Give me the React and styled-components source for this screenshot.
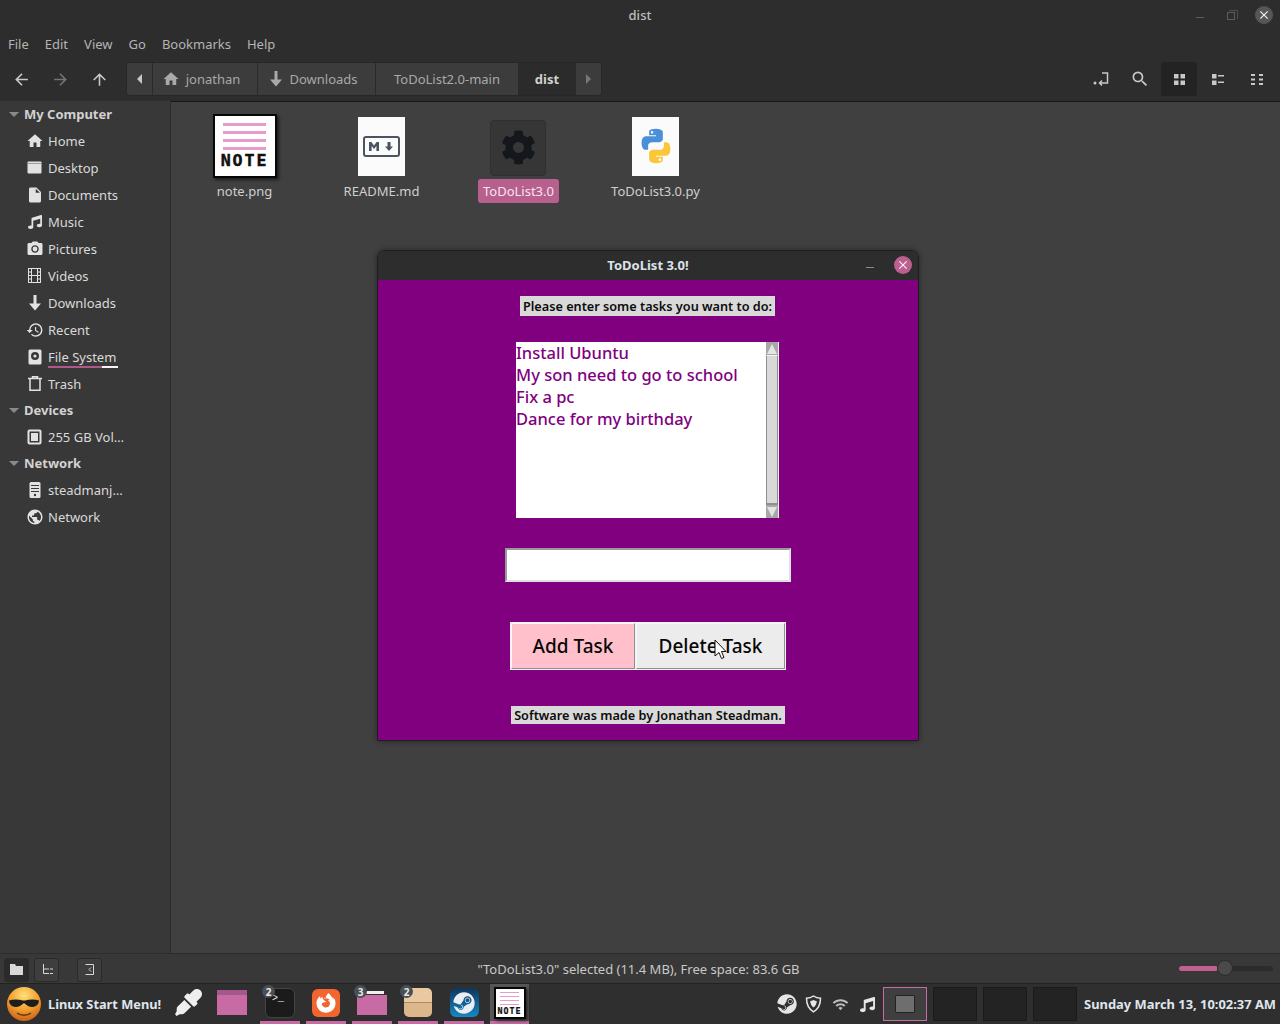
import React from "react";
import styled, { createGlobalStyle } from "styled-components";
import { FaSteam, FaFirefoxBrowser, FaEyeDropper, FaCog, FaMusic } from "react-icons/fa";
import {
  MdHome,
  MdInsertDriveFile,
  MdPhotoCamera,
  MdArrowBack,
  MdArrowForward,
  MdArrowUpward,
  MdHistory,
  MdPublic,
  MdSearch,
  MdWifi,
  MdClose,
} from "react-icons/md";

const UI_FONT = `"Noto Sans", "Open Sans", sans-serif`;

const GlobalStyle = createGlobalStyle`
  html, body {
    margin: 0;
    padding: 0;
    background: #404040;
  }
  * {
    box-sizing: border-box;
  }
`;

const Desktop = styled.div`
  position: relative;
  width: 1280px;
  height: 1024px;
  overflow: hidden;
  display: flex;
  flex-direction: column;
  background: #404040;
  font-family: ${UI_FONT};
  font-size: 13px;
  color: #dadada;
`;

const TitleBar = styled.header`
  height: 30px;
  flex: none;
  display: flex;
  align-items: center;
  justify-content: center;
  position: relative;
  background: #2d2d2d;
  color: #bdbdbd;
  font-weight: 500;
`;

const WindowControls = styled.div`
  position: absolute;
  top: 0;
  right: 7px;
  height: 30px;
  display: flex;
  align-items: center;
  gap: 18px;
`;

const MinimizeMark = styled.span`
  width: 8px;
  height: 1px;
  margin-right: 5px;
  background: ${(p) => p.$color || "#5c5c5c"};
  align-self: center;
  transform: translateY(2px);
`;

const RestoreMark = styled.span`
  width: 8px;
  height: 8px;
  position: relative;
  border: 1px solid #5c5c5c;
  margin-right: 2px;
  transform: translateY(1px);

  &::after {
    content: "";
    position: absolute;
    left: 1px;
    top: -3px;
    width: 8px;
    height: 8px;
    border-top: 1px solid #4c4c4c;
    border-right: 1px solid #4c4c4c;
  }
`;

const CloseButton = styled.span`
  width: 18px;
  height: 18px;
  border-radius: 50%;
  display: flex;
  align-items: center;
  justify-content: center;
  background: ${(p) => p.$color};
  color: #f2f2f2;
  font-size: 14px;
`;

const MenuBar = styled.nav`
  height: 28px;
  flex: none;
  display: flex;
  align-items: center;
  background: #2d2d2d;
  color: #b4b4b4;
`;

const MenuItem = styled.span`
  padding: 0 8px;
`;

const Toolbar = styled.div`
  height: 44px;
  flex: none;
  display: flex;
  align-items: flex-start;
  padding: 4px 5px 0 2px;
  background: #2d2d2d;
  border-bottom: 1px solid #181818;
`;

const ToolButton = styled.span`
  width: 39px;
  height: 34px;
  display: flex;
  align-items: center;
  justify-content: center;
  font-size: 19px;
  color: ${(p) => (p.$dim ? "#747474" : "#c8c8c8")};
`;

const ViewTools = styled.div`
  display: flex;
  gap: 3px;
`;

const ViewButton = styled.span`
  width: 36px;
  height: 34px;
  display: flex;
  align-items: center;
  justify-content: center;
  border-radius: 3px;
  font-size: 20px;
  color: #c8c8c8;
  background: ${(p) => (p.$active ? "#232323" : "transparent")};
`;

const Crumbs = styled.div`
  height: 34px;
  margin-left: 7px;
  display: flex;
  border: 1px solid #272727;
  border-radius: 3px;
  background: #3c3c3c;
  overflow: hidden;
`;

const Crumb = styled.span`
  width: ${(p) => p.$w}px;
  display: flex;
  align-items: center;
  justify-content: center;
  gap: 6px;
  padding-right: ${(p) => p.$pr || 0}px;
  color: ${(p) => (p.$active ? "#d0d0d0" : "#a9a9a9")};
  font-weight: ${(p) => (p.$active ? 700 : 400)};
  background: ${(p) => (p.$active ? "#2b2b2b" : "transparent")};
  border-right: ${(p) => (p.$last ? "none" : "1px solid #2a2a2a")};
  font-size: 18px;

  & > span {
    font-size: 13px;
  }
`;

const Arrow = styled.i`
  width: 0;
  height: 0;
  border-top: 5px solid transparent;
  border-bottom: 5px solid transparent;
  border-${(p) => (p.$left ? "right" : "left")}: 5px solid ${(p) => p.$color || "#c8c8c8"};
`;

const Spacer = styled.div`
  flex: 1;
`;

const Main = styled.main`
  flex: 1;
  display: flex;
  min-height: 0;
  margin-top: -1px;
`;

const Sidebar = styled.aside`
  width: 171px;
  flex: none;
  background: #383838;
  border-right: 1px solid #2c2c2c;
`;

const SideHeading = styled.div`
  height: 26px;
  display: flex;
  align-items: center;
  gap: 5px;
  padding-left: 9px;
  font-weight: 700;
  color: #d2d2d2;
`;

const Caret = styled.i`
  width: 0;
  height: 0;
  border-left: 5px solid transparent;
  border-right: 5px solid transparent;
  border-top: 5px solid #8a8a8a;
`;

const SideRow = styled.div`
  height: 27px;
  display: flex;
  align-items: center;
  gap: 6px;
  padding-left: 27px;
  color: #dadada;
`;

const SideIcon = styled.span`
  width: 15px;
  height: 16px;
  flex: none;
  display: flex;
  align-items: center;
  justify-content: center;
  font-size: 18px;
  color: #e2e2e2;

  & > svg {
    flex: none;
  }
`;

const SideLabel = styled.span`
  position: relative;
`;

const UsageBar = styled.span`
  position: absolute;
  left: 0;
  bottom: -2px;
  width: 70px;
  height: 2px;
  background: linear-gradient(to right, #b0588a 0 54px, #f4f4f4 54px);
`;

const Files = styled.section`
  flex: 1;
  display: flex;
  align-items: flex-start;
  padding: 12px 0 0 5px;
`;

const FileItem = styled.div`
  width: 137px;
  display: flex;
  flex-direction: column;
  align-items: center;
`;

const IconBox = styled.div`
  height: 66px;
  display: flex;
  align-items: center;
  justify-content: center;
`;

const FileName = styled.span`
  padding: 3px ${(p) => (p.$selected ? 5 : 4)}px;
  height: 24px;
  line-height: 18px;
  border-radius: 3px;
  color: ${(p) => (p.$selected ? "#f5e6ee" : "#cfcfcf")};
  background: ${(p) => (p.$selected ? "#b75f8d" : "transparent")};
`;

const NoteThumb = styled.div`
  width: ${(p) => p.$size}px;
  height: ${(p) => p.$size}px;
  display: flex;
  flex-direction: column;
  align-items: center;
  padding: ${(p) => p.$size * 0.11}px ${(p) => p.$size * 0.13}px 0;
  gap: ${(p) => p.$size * 0.085}px;
  background: #ffffff;
  border: ${(p) => Math.max(2, p.$size / 22)}px solid #060606;
  box-shadow: 2px 2px 3px rgba(0, 0, 0, 0.55);
`;

const NoteLine = styled.span`
  width: 100%;
  height: ${(p) => Math.max(1, p.$size / 24)}px;
  flex: none;
  background: #e59ccd;
`;

const NoteWord = styled.span`
  font-family: "DejaVu Sans Mono", "Liberation Mono", monospace;
  font-weight: 700;
  color: #111;
  font-size: ${(p) => p.$size * 0.26}px;
  line-height: ${(p) => p.$size * 0.2}px;
  letter-spacing: ${(p) => p.$size * 0.03}px;
  -webkit-text-stroke: ${(p) => p.$size * 0.007}px #111;
`;

const Page = styled.div`
  width: 47px;
  height: 59px;
  background: #fbfbfb;
  display: flex;
  align-items: center;
  justify-content: center;
`;

const GearTile = styled.div`
  width: 56px;
  height: 56px;
  margin-top: 3px;
  margin-right: 1px;
  border-radius: 4px;
  border: 1px solid #2f2f2f;
  background: #363636;
  display: flex;
  align-items: center;
  justify-content: center;
  font-size: 35px;
  color: #14171b;
`;

const StatusBar = styled.footer`
  height: 31px;
  flex: none;
  display: grid;
  grid-template-columns: 1fr auto 1fr;
  align-items: center;
  background: #383838;
  border-top: 1px solid #2c2c2c;
  border-bottom: 1px solid #222222;
  color: #c8c8c8;
  padding: 0 7px 0 4px;
`;

const StatusTools = styled.div`
  display: flex;
  align-items: center;
  gap: 5px;
  padding-top: 2px;
`;

const StatusButton = styled.span`
  width: 25px;
  height: 24px;
  border-radius: 3px;
  display: flex;
  align-items: center;
  justify-content: center;
  margin-left: ${(p) => p.$gap || 0}px;
  background: ${(p) => (p.$active ? "#2b2b2b" : "#3e3e3e")};
  border: 1px solid #2a2a2a;
`;

const ZoomSlider = styled.div`
  justify-self: end;
  position: relative;
  width: 94px;
  height: 5px;
  border-radius: 3px;
  background: #2b2b2b;
`;

const ZoomFill = styled.span`
  position: absolute;
  left: 0;
  top: 0;
  bottom: 0;
  border-radius: 3px;
  background: #c0608f;
`;

const ZoomKnob = styled.span`
  position: absolute;
  top: -6px;
  width: 16px;
  height: 16px;
  border-radius: 50%;
  background: #4a4a4a;
  border: 1px solid #2a2a2a;
`;

const Taskbar = styled.div`
  height: 40px;
  flex: none;
  display: flex;
  align-items: stretch;
  background: #2f2f2f;
  padding-right: 4px;
`;

const StartButton = styled.div`
  width: 168px;
  display: flex;
  align-items: center;
  gap: 6px;
  padding-left: 6px;
  font-size: 12.8px;
  font-weight: 700;
  color: #dfe6ee;
`;

const Launchers = styled.div`
  display: flex;
  gap: 4px;
`;

const WindowList = styled.div`
  display: flex;
  gap: 6px;
  margin-left: 8px;
`;

const Slot = styled.div`
  position: relative;
  width: ${(p) => p.$w || 40}px;
  display: flex;
  align-items: center;
  justify-content: center;
  background: ${(p) => (p.$active ? "#565656" : "transparent")};
  border-bottom: ${(p) => (p.$open ? "3px solid #c86aa3" : "3px solid transparent")};
`;

const Badge = styled.span`
  position: absolute;
  left: 2px;
  top: 1px;
  width: 13px;
  height: 13px;
  border-radius: 50%;
  display: flex;
  align-items: center;
  justify-content: center;
  font-size: 10px;
  font-weight: 700;
  color: #e8e8e8;
  background: #4a4f55;
  z-index: 1;
`;

const PinkFolder = styled.div`
  width: 30px;
  height: 25px;
  background: #c86aa3;
  border-top: 5px solid #a3588a;
`;

const OpenFolder = styled.div`
  position: relative;
  width: 30px;
  height: 20px;
  margin-top: 5px;
  background: #c86aa3;

  &::before {
    content: "";
    position: absolute;
    left: 8px;
    right: 3px;
    top: -4px;
    height: 3px;
    background: #f0f0f0;
  }
`;

const TerminalTile = styled.div`
  width: 30px;
  height: 30px;
  border-radius: 6px;
  background: #1b1b1b;
  border: 1px solid #444;
  color: #e8e8e8;
  font-family: "Liberation Mono", monospace;
  font-size: 10px;
  line-height: 20px;
  padding-left: 6px;
`;

const FirefoxTile = styled.div`
  width: 28px;
  height: 28px;
  border-radius: 6px;
  background: #f2652f;
  display: flex;
  align-items: center;
  justify-content: center;
  font-size: 20px;
  color: #fff;
`;

const BoxTile = styled.div`
  width: 28px;
  height: 29px;
  border-radius: 5px;
  background: linear-gradient(#eac8a1 0 14px, #a98a67 14px 15px, #dcb78c 15px);
`;

const SteamTile = styled.div`
  width: 29px;
  height: 29px;
  border-radius: 6px;
  background: linear-gradient(#10355a, #1687c6);
  display: flex;
  align-items: center;
  justify-content: center;
  font-size: 22px;
  color: #e8eef2;
`;

const Tray = styled.div`
  margin-left: auto;
  display: flex;
  align-items: center;
`;

const TrayIcon = styled.span`
  width: 27px;
  display: flex;
  align-items: center;
  justify-content: center;
  font-size: ${(p) => p.$size || 17}px;
  color: ${(p) => p.$color || "#e6e6e6"};
`;

const Workspaces = styled.div`
  display: flex;
  gap: 6px;
  margin-left: 2px;
`;

const Workspace = styled.div`
  width: 44px;
  height: 34px;
  display: flex;
  align-items: center;
  justify-content: center;
  background: ${(p) => (p.$active ? "#3f3f3f" : "#232323")};
  border: 1px solid ${(p) => (p.$active ? "#c86aa3" : "#1a1a1a")};
`;

const MiniWindow = styled.span`
  width: 20px;
  height: 18px;
  background: #6e6e6e;
  border: 1px solid #222;
  border-radius: 1px;
`;

const Clock = styled.time`
  margin-left: 7px;
  font-size: 12.9px;
  font-weight: 700;
  color: #dfe6ee;
  white-space: nowrap;
`;

const AppWindow = styled.div`
  position: absolute;
  left: 377px;
  top: 250px;
  width: 542px;
  height: 491px;
  display: flex;
  flex-direction: column;
  border: 1px solid #1e1e1e;
  border-radius: 7px 7px 0 0;
  box-shadow: 0 0 6px rgba(0, 0, 0, 0.4);
  overflow: hidden;
`;

const AppTitle = styled.div`
  height: 29px;
  flex: none;
  padding-bottom: 1px;
  display: flex;
  align-items: center;
  justify-content: center;
  position: relative;
  background: #2d2d2d;
  color: #dde3ea;
  font-weight: 700;
`;

const AppControls = styled.div`
  position: absolute;
  right: 6px;
  top: 5px;
  display: flex;
  align-items: center;
  gap: 15px;
`;

const AppBody = styled.div`
  flex: 1;
  display: flex;
  flex-direction: column;
  align-items: center;
  padding-top: 16px;
  background: #800080;
`;

const TkLabel = styled.div`
  width: ${(p) => p.$w}px;
  height: ${(p) => p.$h}px;
  margin-top: ${(p) => p.$mt || 0}px;
  margin-right: ${(p) => (p.$w % 2 ? 1 : 0)}px;
  display: flex;
  align-items: center;
  justify-content: center;
  white-space: nowrap;
  background: #d9d9d9;
  color: #0c0c0c;
  font-size: 12.7px;
  font-weight: 600;
`;

const ListBox = styled.div`
  width: 263px;
  height: 176px;
  margin: 26px 1px 0 0;
  display: flex;
  background: #fff;
`;

const ListItems = styled.ul`
  flex: 1;
  margin: 0;
  padding: 0;
  list-style: none;
  color: #800080;
  font-size: 16.5px;
  font-weight: 500;
  line-height: 22px;
`;

const ScrollBar = styled.div`
  width: 13px;
  display: flex;
  flex-direction: column;
  border-right: 1px solid #f4f4f4;
`;

const ScrollArrow = styled.span`
  height: 13px;
  flex: none;
  display: flex;
  align-items: center;
  justify-content: center;
  background: #a8a8a8;

  &::after {
    content: "";
    width: 0;
    height: 0;
    border-left: 5px solid transparent;
    border-right: 5px solid transparent;
    border-${(p) => (p.$up ? "bottom" : "top")}: 10px solid #e4e4e4;
  }
`;

const ScrollThumb = styled.span`
  flex: 1;
  background: #d9d9d9;
  border: 1px solid #8e8e8e;
  border-top-color: #f4f4f4;
  border-bottom: 2px solid #8e8e8e;
`;

const Entry = styled.div`
  width: 286px;
  height: 34px;
  margin-top: 30px;
  background: #fff;
  border: 2px solid;
  border-color: #9a9a9a #e0e0e0 #e0e0e0 #9a9a9a;
`;

const ButtonRow = styled.div`
  margin-top: 40px;
  display: flex;
  padding: 1px;
  gap: 1px;
  background: #f4f4f4;
`;

const TkButton = styled.div`
  width: ${(p) => p.$w}px;
  height: 46px;
  display: flex;
  align-items: center;
  justify-content: center;
  background: ${(p) => p.$bg};
  color: #070707;
  font-size: 19px;
  font-weight: 500;
  border: 1px solid;
  border-color: #f6f6f6 #8e8e8e #8e8e8e #f6f6f6;
`;

const Cursor = styled.svg`
  position: absolute;
  left: 336px;
  top: 388px;
`;

function DownArrowGlyph() {
  return (
    <svg width="14" height="16" viewBox="0 0 14 16" fill="currentColor">
      <path d="M5.500 0h3v8.500H13L7 15.500 1 8.500h4.500z" />
    </svg>
  );
}

function DesktopGlyph() {
  return (
    <svg width="15" height="13" viewBox="0 0 15 13">
      <rect x="0.5" y="0.5" width="14" height="12" rx="1" fill="#e2e2e2" />
      <rect x="0.5" y="2" width="14" height="0.8" fill="#8a8a8a" />
    </svg>
  );
}

function FilmGlyph() {
  return (
    <svg width="13" height="15" viewBox="0 0 13 15" fill="none" stroke="#e2e2e2">
      <rect x="0.5" y="0.5" width="12" height="14" />
      <path d="M3.500 0.500v14M9.500 0.500v14M0.500 4h3M0.500 7.500h3M0.500 11h3M9.500 4h3M9.500 7.500h3M9.500 11h3M3.500 7.500h6" />
    </svg>
  );
}

function DiskGlyph() {
  return (
    <svg width="14" height="16" viewBox="0 0 14 16">
      <rect x="0.5" y="0.5" width="13" height="15" rx="1.5" fill="#e2e2e2" />
      <circle cx="7" cy="7" r="4" fill="#383838" />
      <circle cx="7" cy="7" r="1.6" fill="#e2e2e2" />
    </svg>
  );
}

function TrashGlyph() {
  return (
    <svg width="14" height="15" viewBox="0 0 14 15" fill="none" stroke="#e2e2e2" strokeWidth="1.5">
      <path d="M0 2.500h14M4.500 2.500V.8h5v1.700M2 2.500v11.700h10V2.500" />
    </svg>
  );
}

function ChipGlyph() {
  return (
    <svg width="15" height="16" viewBox="0 0 15 16">
      <rect x="0.5" y="0.5" width="14" height="15" rx="2" fill="#e2e2e2" />
      <rect x="2.500" y="2.500" width="10" height="11" fill="#383838" />
      <rect x="4" y="4" width="7" height="8" fill="#e2e2e2" />
    </svg>
  );
}

function ServerGlyph() {
  return (
    <svg width="12" height="16" viewBox="0 0 12 16">
      <rect x="0.5" y="0" width="11" height="16" rx="1.5" fill="#e2e2e2" />
      <path d="M2 3.500h8M2 6.500h8M2 9.500h8" stroke="#383838" strokeWidth="1.2" />
      <circle cx="6" cy="13" r="1.2" fill="#383838" />
    </svg>
  );
}

function Markdown() {
  return (
    <svg width="37" height="21" viewBox="0 0 37 21" fill="none">
      <rect x="1" y="1" width="35" height="19" rx="2" stroke="#4a5561" strokeWidth="2" />
      <path d="M6 15V6h2.400l2.600 3.400L13.600 6H16v9h-2.600v-5L11 13l-2.400-3v5z" fill="#4a5561" />
      <path d="M24.500 6h3v4.500H30L26 15l-4-4.500h2.500z" fill="#4a5561" />
    </svg>
  );
}

function PythonLogo() {
  const half =
    "M11.900 2C7.700 2 8 3.800 8 3.800v1.900h4v.6H6.300S3.600 6 3.600 10.200s2.400 4 2.400 4h1.400v-2s-.1-2.400 2.300-2.400h4s2.300 0 2.300-2.200V4.400S16.400 2 11.900 2zM9.700 3.300a.7.7 0 110 1.500.7.7 0 010-1.500z";
  return (
    <svg width="36" height="36" viewBox="2.500 1.500 19 21">
      <path d={half} fill="#4a90d9" />
      <path d={half} fill="#fcc63a" transform="rotate(180 12 12)" />
    </svg>
  );
}

function Smiley() {
  return (
    <svg width="36" height="36" viewBox="0 0 36 36">
      <defs>
        <radialGradient id="face" cx="50%" cy="25%" r="75%">
          <stop offset="0%" stopColor="#fde07a" />
          <stop offset="55%" stopColor="#f3a02e" />
          <stop offset="100%" stopColor="#c9651a" />
        </radialGradient>
      </defs>
      <circle cx="18" cy="18" r="17" fill="url(#face)" />
      <path d="M3 14.500c4-1.500 9-1.500 14 0h2c5-1.500 10-1.500 14 0-.5 5-4 6.500-7.500 6.500S20 18.500 18 17c-2 1.500-4 4-7.500 4S3.500 19.500 3 14.500z" fill="#1d1d1d" />
      <path d="M11 27c4 3 10 3 14 0" stroke="#6b3208" strokeWidth="1.500" fill="none" />
    </svg>
  );
}

function Note({ size }) {
  return (
    <NoteThumb $size={size}>
      <NoteLine $size={size} />
      <NoteLine $size={size} />
      <NoteLine $size={size} />
      <NoteLine $size={size} />
      <NoteWord $size={size}>NOTE</NoteWord>
    </NoteThumb>
  );
}

const SIDE_GROUPS = [
  {
    title: "My Computer",
    rows: [
      { label: "Home", icon: <MdHome /> },
      { label: "Desktop", icon: <DesktopGlyph /> },
      { label: "Documents", icon: <MdInsertDriveFile /> },
      { label: "Music", icon: <FaMusic size={14} /> },
      { label: "Pictures", icon: <MdPhotoCamera /> },
      { label: "Videos", icon: <FilmGlyph /> },
      { label: "Downloads", icon: <DownArrowGlyph /> },
      { label: "Recent", icon: <MdHistory /> },
      { label: "File System", icon: <DiskGlyph />, usage: true },
      { label: "Trash", icon: <TrashGlyph /> },
    ],
  },
  { title: "Devices", rows: [{ label: "255 GB Vol…", icon: <ChipGlyph /> }] },
  {
    title: "Network",
    rows: [
      { label: "steadmanj…", icon: <ServerGlyph /> },
      { label: "Network", icon: <MdPublic /> },
    ],
  },
];

export default function App() {
  return (
    <Desktop>
      <GlobalStyle />
      <TitleBar>
        dist
        <WindowControls>
          <MinimizeMark />
          <RestoreMark />
          <CloseButton $color="#565656">
            <MdClose />
          </CloseButton>
        </WindowControls>
      </TitleBar>

      <MenuBar>
        {["File", "Edit", "View", "Go", "Bookmarks", "Help"].map((m) => (
          <MenuItem key={m}>{m}</MenuItem>
        ))}
      </MenuBar>

      <Toolbar>
        <ToolButton><MdArrowBack /></ToolButton>
        <ToolButton $dim><MdArrowForward /></ToolButton>
        <ToolButton><MdArrowUpward /></ToolButton>
        <Crumbs>
          <Crumb $w={26}><Arrow $left /></Crumb>
          <Crumb $w={105} $pr={8}><MdHome /><span>jonathan</span></Crumb>
          <Crumb $w={118} $pr={6}><DownArrowGlyph /><span>Downloads</span></Crumb>
          <Crumb $w={143}><span>ToDoList2.0-main</span></Crumb>
          <Crumb $w={57} $active><span>dist</span></Crumb>
          <Crumb $w={25} $last><Arrow $color="#777" /></Crumb>
        </Crumbs>
        <Spacer />
        <ViewTools>
          <ViewButton>
            <svg width="16" height="14" viewBox="0 0 16 14" fill="none" stroke="#c8c8c8" strokeWidth="1.500">
              <circle cx="2" cy="11" r="1.500" fill="#c8c8c8" stroke="none" />
              <path d="M9 1h5.500v10H7M9 8.500 6.500 11 9 13.500" />
            </svg>
          </ViewButton>
          <ViewButton><MdSearch /></ViewButton>
          <ViewButton $active>
            <svg width="11" height="11" viewBox="0 0 11 11" fill="#c8c8c8">
              <path d="M0 0h4.500v4.500H0zM6.500 0H11v4.500H6.500zM0 6.500h4.500V11H0zM6.500 6.500H11V11H6.500z" />
            </svg>
          </ViewButton>
          <ViewButton>
            <svg width="12" height="11" viewBox="0 0 12 11" fill="#c8c8c8">
              <path d="M0 0h4.500v4.500H0zM6 1h6v1.500H6zM0 6.500h4.500V11H0zM6 7.500h6V9H6z" />
            </svg>
          </ViewButton>
          <ViewButton>
            <svg width="12" height="11" viewBox="0 0 12 11" fill="#c8c8c8">
              <path d="M0 0h4v2H0zM8 0h4v2H8zM0 4.500h4v2H0zM8 4.500h4v2H8zM0 9h4v2H0zM8 9h4v2H8z" />
            </svg>
          </ViewButton>
        </ViewTools>
      </Toolbar>

      <Main>
        <Sidebar>
          {SIDE_GROUPS.map((group) => (
            <div key={group.title}>
              <SideHeading>
                <Caret />
                {group.title}
              </SideHeading>
              {group.rows.map((row) => (
                <SideRow key={row.label}>
                  <SideIcon>{row.icon}</SideIcon>
                  <SideLabel>
                    {row.label}
                    {row.usage && <UsageBar />}
                  </SideLabel>
                </SideRow>
              ))}
            </div>
          ))}
        </Sidebar>
        <Files>
          <FileItem>
            <IconBox><Note size={64} /></IconBox>
            <FileName>note.png</FileName>
          </FileItem>
          <FileItem>
            <IconBox><Page><Markdown /></Page></IconBox>
            <FileName>README.md</FileName>
          </FileItem>
          <FileItem>
            <IconBox><GearTile><FaCog /></GearTile></IconBox>
            <FileName $selected>ToDoList3.0</FileName>
          </FileItem>
          <FileItem>
            <IconBox><Page><PythonLogo /></Page></IconBox>
            <FileName>ToDoList3.0.py</FileName>
          </FileItem>
        </Files>
      </Main>

      <StatusBar>
        <StatusTools>
          <StatusButton $active>
            <svg width="13" height="11" viewBox="0 0 13 11" fill="#d8d8d8">
              <path d="M0 0h5l1 2h7v9H0z" />
            </svg>
          </StatusButton>
          <StatusButton>
            <svg width="12" height="12" viewBox="0 0 12 12" fill="none" stroke="#d8d8d8">
              <path d="M2.500 0v9.500H8M2.500 5H8M9 5h3M9 9.500h3" />
            </svg>
          </StatusButton>
          <StatusButton $gap={13}>
            <svg width="9" height="11" viewBox="0 0 9 11" fill="none" stroke="#d8d8d8">
              <path d="M.5.500h8v10h-8M6 3.500 4 5.500l2 2" />
            </svg>
          </StatusButton>
        </StatusTools>
        <span>"ToDoList3.0" selected (11.4 MB), Free space: 83.6 GB</span>
        <ZoomSlider>
          <ZoomFill style={{ width: "41%" }} />
          <ZoomKnob style={{ left: "40%" }} />
        </ZoomSlider>
      </StatusBar>

      <Taskbar>
        <StartButton>
          <Smiley />
          Linux Start Menu!
        </StartButton>
        <Launchers>
          <Slot><FaEyeDropper color="#efefef" size={27} /></Slot>
          <Slot><PinkFolder /></Slot>
        </Launchers>
        <WindowList>
          <Slot $open><Badge>2</Badge><TerminalTile>&gt;_</TerminalTile></Slot>
          <Slot $open><FirefoxTile><FaFirefoxBrowser /></FirefoxTile></Slot>
          <Slot $open><Badge>3</Badge><OpenFolder /></Slot>
          <Slot $open><Badge>2</Badge><BoxTile /></Slot>
          <Slot $open><SteamTile><FaSteam /></SteamTile></Slot>
          <Slot $open $active $w={39}><Note size={32} /></Slot>
        </WindowList>
        <Tray>
          <TrayIcon $size={20}><FaSteam /></TrayIcon>
          <TrayIcon>
            <svg width="17" height="18" viewBox="0 0 17 18" fill="none" stroke="#e6e6e6" strokeWidth="1.500">
              <path d="M8.500 1c2 1.500 4.500 2.300 7 2.300 0 5.700-2 10.700-7 13.500-5-2.800-7-7.800-7-13.500 2.500 0 5-.8 7-2.300z" />
              <path d="M8.500 5c1 .6 2.200 1 3.300 1.100-.2 2.700-1.200 5-3.300 6.500-2.100-1.500-3.100-3.800-3.300-6.500C6.300 6 7.500 5.600 8.500 5z" fill="#e6e6e6" stroke="none" />
            </svg>
          </TrayIcon>
          <TrayIcon $color="#bdbdbd"><MdWifi /></TrayIcon>
          <TrayIcon $size={15}><FaMusic /></TrayIcon>
          <Workspaces>
            <Workspace $active><MiniWindow /></Workspace>
            <Workspace />
            <Workspace />
            <Workspace />
          </Workspaces>
          <Clock>Sunday March 13, 10:02:37 AM</Clock>
        </Tray>
      </Taskbar>

      <AppWindow>
        <AppTitle>
          ToDoList 3.0!
          <AppControls>
            <MinimizeMark $color="#8a8a8a" />
            <CloseButton $color="#bc5f90"><MdClose /></CloseButton>
          </AppControls>
        </AppTitle>
        <AppBody>
          <TkLabel $w={255} $h={20}>Please enter some tasks you want to do:</TkLabel>
          <ListBox>
            <ListItems>
              <li>Install Ubuntu</li>
              <li>My son need to go to school</li>
              <li>Fix a pc</li>
              <li>Dance for my birthday</li>
            </ListItems>
            <ScrollBar>
              <ScrollArrow $up />
              <ScrollThumb />
              <ScrollArrow />
            </ScrollBar>
          </ListBox>
          <Entry />
          <ButtonRow>
            <TkButton $w={124} $bg="#ffc0cb">Add Task</TkButton>
            <TkButton $w={149} $bg="#ececec">Delete Task</TkButton>
          </ButtonRow>
          <TkLabel $w={274} $h={18} $mt={36}>Software was made by Jonathan Steadman.</TkLabel>
        </AppBody>
        <Cursor width="13" height="21" viewBox="0 0 13 21">
          <path d="M1 1v16l4-3.500 2.500 6 2.500-1-2.500-6H12z" fill="#fff" stroke="#111" strokeWidth="1" />
        </Cursor>
      </AppWindow>
    </Desktop>
  );
}
